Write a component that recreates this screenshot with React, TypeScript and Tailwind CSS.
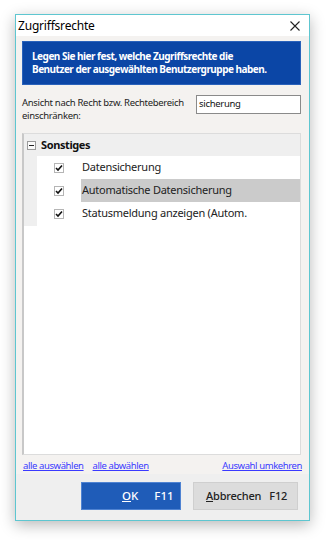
import React from "react";

const rows = [
  { label: "Datensicherung", selected: false },
  { label: "Automatische Datensicherung", selected: true },
  { label: "Statusmeldung anzeigen (Autom.", selected: false },
];

function CheckBox() {
  return (
    <div className="w-[10px] h-[10px] border border-[#b5b5b5] bg-white flex items-center justify-center">
      <svg width="8" height="8" viewBox="0 0 8 8">
        <path d="M1 4 L3 6 L7 1.5" stroke="#111" strokeWidth="1.6" fill="none" />
      </svg>
    </div>
  );
}

export default function App() {
  return (
    <div
      className="w-[328px] h-[540px] bg-white overflow-hidden pt-[14px] pl-[15px]"
      style={{ fontFamily: '"Noto Sans", "Open Sans", sans-serif' }}
    >
      <div className="w-[295px] h-[507px] border border-[#5ec6d0] bg-[#f4f2f0] flex flex-col shadow-[0_4px_14px_rgba(0,0,0,0.28)]">
        {/* title bar */}
        <div className="h-[21px] bg-white flex items-center justify-between pl-[2px] pr-[9px]">
          <span className="text-[12px] text-black tracking-[-0.2px]">Zugriffsrechte</span>
          <svg width="10" height="10" viewBox="0 0 10 10">
            <path d="M0.5 0.5 L9.5 9.5 M9.5 0.5 L0.5 9.5" stroke="#222" strokeWidth="1.1" />
          </svg>
        </div>

        <div className="flex-1 flex flex-col pl-[6px] pr-[8px] pt-[5px]">
          {/* banner */}
          <div className="h-[44px] bg-[#0b46a6] border border-[#2a62bb] flex flex-col justify-center pl-[9px]">
            <p className="text-white font-bold text-[10px] leading-[13px] tracking-[-0.5px]">
              Legen Sie hier fest, welche Zugriffsrechte die
            </p>
            <p className="text-white font-bold text-[10px] leading-[13px] tracking-[-0.5px]">
              Benutzer der ausgewählten Benutzergruppe haben.
            </p>
          </div>

          {/* filter */}
          <div className="flex items-start justify-between mt-[11px]">
            <p className="text-[9.5px] leading-[13px] text-[#222] tracking-[-0.3px] whitespace-nowrap">
              Ansicht nach Recht bzw. Rechtebereich
              <br />
              einschränken:
            </p>
            <div className="w-[105px] h-[19px] border border-[#8a8a8a] bg-white flex items-center pl-[2px] -mt-[1px]">
              <span className="text-[9.5px] text-[#111] tracking-[-0.3px]">sicherung</span>
            </div>
          </div>

          {/* tree */}
          <div className="mt-[11px] h-[322px] border border-[#dcdcdc] border-l-[#c8c8c8] border-l-2 bg-white flex flex-col">
            <div className="h-[22px] bg-[#efefef] flex items-center pl-[3px]">
              <div className="w-[9px] h-[9px] border border-[#9a9a9a] bg-[#fafafa] flex items-center justify-center">
                <div className="w-[5px] h-[1px] bg-[#222]" />
              </div>
              <span className="ml-[5px] text-[11px] font-bold text-[#111] tracking-[-0.4px]">Sonstiges</span>
            </div>
            <div className="flex">
              <div className="w-[13px] bg-[#efefef]" />
              <div className="flex-1 flex flex-col pb-[1px]">
                {rows.map((r) => (
                  <div key={r.label} className="h-[23px] flex items-center">
                    <div className="w-[44px] flex justify-center pr-[1px]">
                      <CheckBox />
                    </div>
                    <div
                      className={`flex-1 h-full flex items-center pl-[1px] ${
                        r.selected ? "bg-[#cbcbcb]" : "bg-white"
                      }`}
                    >
                      <span className="text-[11px] text-[#222] tracking-[-0.25px]">{r.label}</span>
                    </div>
                  </div>
                ))}
              </div>
            </div>
          </div>

          {/* links */}
          <div className="flex items-center mt-[4px] text-[9.5px] tracking-[-0.4px] text-[#3a3aff] underline">
            <span className="ml-[1px]">alle auswählen</span>
            <span className="ml-[9px]">alle abwählen</span>
            <span className="ml-auto -mr-[1px]">Auswahl umkehren</span>
          </div>
        </div>

        {/* footer */}
        <div className="h-[46px] bg-[#efefef] flex items-start justify-end pt-[8px] pr-[11px] gap-[12px]">
          <div className="w-[100px] h-[28px] bg-[#1f5cb8] border border-[#4f83d2] flex items-center text-white text-[11.5px] font-medium pl-[40px]">
            <span>
              <span className="underline">O</span>K
            </span>
            <span className="ml-[16px]">F11</span>
          </div>
          <div className="w-[105px] h-[28px] bg-[#dcdcdc] border border-[#cfcfcf] flex items-center text-[#222] text-[11px] font-medium pl-[12px] tracking-[-0.2px]">
            <span>
              <span className="underline">A</span>bbrechen
            </span>
            <span className="ml-[8px]">F12</span>
          </div>
        </div>
      </div>
    </div>
  );
}
